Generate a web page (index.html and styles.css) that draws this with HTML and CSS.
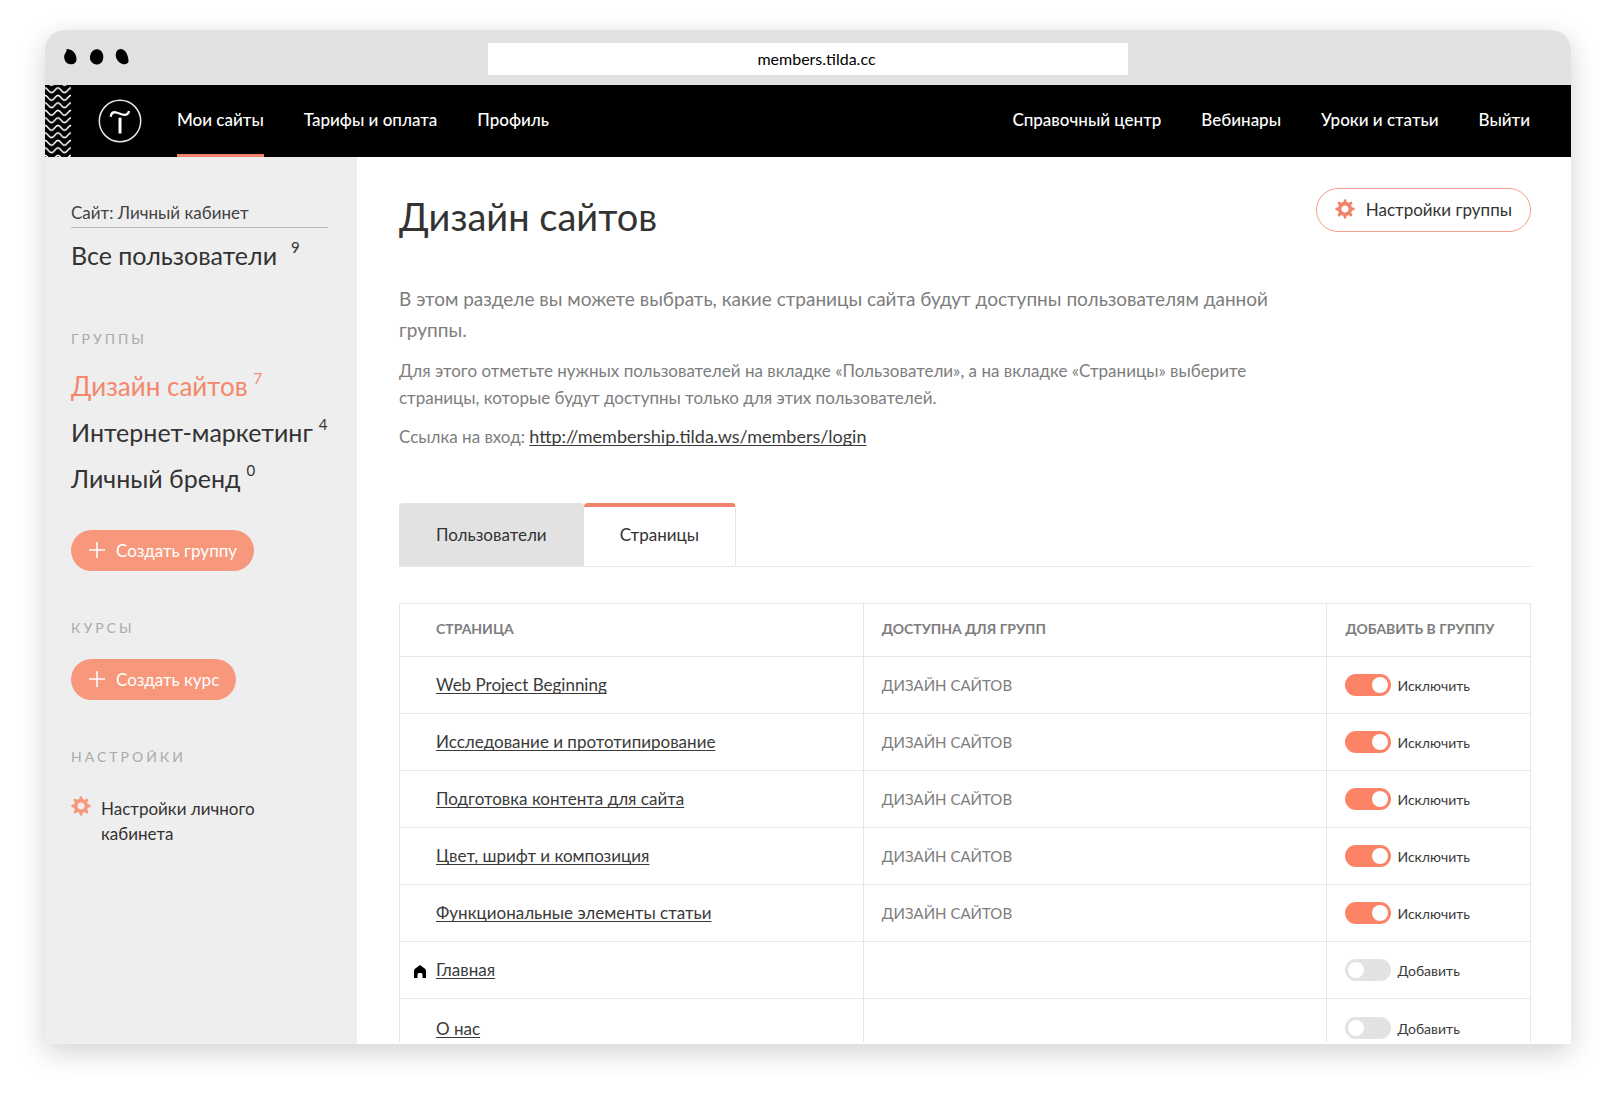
FILE: index.html
```html
<!DOCTYPE html>
<html lang="ru">
<head>
<meta charset="utf-8">
<meta name="viewport" content="width=device-width, initial-scale=1">
<title>Дизайн сайтов — Личный кабинет</title>
<link rel="stylesheet" href="styles.css">
</head>
<body>
<svg class="sprite" aria-hidden="true">
  <symbol id="gear" viewBox="-10 -10 20 20">
    <circle r="5.4" fill="none" stroke="currentColor" stroke-width="3.6"/>
    <path d="M0-6.5V-8.3M0 6.5V8.3M-6.5 0H-8.3M6.5 0H8.3M4.6-4.6 5.9-5.9M-4.6-4.6-5.9-5.9M4.6 4.6 5.9 5.9M-4.6 4.6-5.9 5.9" stroke="currentColor" stroke-width="2.9" stroke-linecap="round"/>
  </symbol>
  <symbol id="plus" viewBox="0 0 16 16">
    <path d="M8 0V16M0 8H16" stroke="currentColor" stroke-width="1.6"/>
  </symbol>
</svg>

<div class="window">
  <div class="chrome">
    <svg class="dots" viewBox="0 0 66 18" aria-hidden="true">
      <path d="M2.500 1C8 1 12.500 5 12.500 11C12.500 15 9.500 16.500 6.500 16.300C2.500 16 0 12.500 .2 8.500C.5 5 3 4.500 2.500 1Z"/>
      <path d="M33 1.200C37 1.500 39.500 5 39.300 9.500C39 14 36 16.600 32.500 16.500C28.500 16 25.700 13 26 9C26.300 5 29 1 33 1.200Z"/>
      <path d="M56.500 1C61 .8 63.800 6 64.500 12C65 15.500 62 16.500 59.500 16.300C55 15.500 51.500 11 51.700 6.500C52 3 53.800 1.200 56.500 1Z"/>
    </svg>
    <input class="address" type="text" value="members.tilda.cc" aria-label="Адрес" readonly>
  </div>

  <header class="topbar">
    <svg class="waves" aria-hidden="true">
      <defs>
        <pattern id="wave" width="13" height="7.5" y="1.6" patternUnits="userSpaceOnUse">
          <path d="M-6.500 6C-3.700 6-2.800 1.300 0 1.300S3.700 6 6.500 6S10.200 1.300 13 1.300S16.700 6 19.500 6" fill="none" stroke="#fff" stroke-width="1.500"/>
        </pattern>
      </defs>
      <rect width="100%" height="100%" fill="url(#wave)"/>
    </svg>
    <a class="logo" href="#" aria-label="Tilda">
      <svg viewBox="-22 -22 44 44" aria-hidden="true">
        <circle r="20.700" fill="none" stroke="#e6e6e6" stroke-width="1.500"/>
        <path d="M-9.300-4.300C-8.800-7.500-7-9-4.500-8.700C-1.500-8.400 1-6.200 4.300-6.200C7-6.200 8.600-7.600 9-10" fill="none" stroke="#fff" stroke-width="2.300"/>
        <path d="M0-3.300V12.500" stroke="#fff" stroke-width="3"/>
      </svg>
    </a>
    <nav class="menu">
      <a class="menu-link is-active" href="#">Мои сайты</a>
      <a class="menu-link" href="#">Тарифы и оплата</a>
      <a class="menu-link" href="#">Профиль</a>
    </nav>
    <nav class="menu menu-right">
      <a class="menu-link" href="#">Справочный центр</a>
      <a class="menu-link" href="#">Вебинары</a>
      <a class="menu-link" href="#">Уроки и статьи</a>
      <a class="menu-link" href="#">Выйти</a>
    </nav>
  </header>

  <div class="layout">
    <aside class="sidebar">
      <a class="site" href="#">Сайт: Личный кабинет</a>
      <a class="group all-users" href="#">Все пользователи <span class="count">9</span></a>

      <h2 class="label">ГРУППЫ</h2>
      <ul class="groups">
        <li><a class="group is-current" href="#">Дизайн сайтов <span class="count">7</span></a></li>
        <li><a class="group" href="#">Интернет-маркетинг <span class="count">4</span></a></li>
        <li><a class="group" href="#">Личный бренд <span class="count">0</span></a></li>
      </ul>
      <button class="create" type="button"><svg class="plus"><use href="#plus"/></svg>Создать группу</button>

      <h2 class="label">КУРСЫ</h2>
      <button class="create" type="button"><svg class="plus"><use href="#plus"/></svg>Создать курс</button>

      <h2 class="label">НАСТРОЙКИ</h2>
      <a class="cabinet" href="#"><svg class="gear"><use href="#gear"/></svg><span>Настройки личного кабинета</span></a>
    </aside>

    <main class="content">
      <div class="heading">
        <h1>Дизайн сайтов</h1>
        <button class="settings" type="button"><svg class="gear"><use href="#gear"/></svg>Настройки группы</button>
      </div>

      <div class="intro">
        <p class="lead">В этом разделе вы можете выбрать, какие страницы сайта будут доступны пользователям данной группы.</p>
        <p>Для этого отметьте нужных пользователей на вкладке «Пользователи», а на вкладке «Страницы» выберите страницы, которые будут доступны только для этих пользователей.</p>
        <p>Ссылка на вход: <a class="link login" href="#">http://membership.tilda.ws/members/login</a></p>
      </div>

      <div class="tabs" role="tablist">
        <button class="tab" type="button" role="tab" aria-selected="false">Пользователи</button>
        <button class="tab is-open" type="button" role="tab" aria-selected="true">Страницы</button>
      </div>

      <table class="pages">
        <thead>
          <tr><th class="page" scope="col">СТРАНИЦА</th><th scope="col">ДОСТУПНА ДЛЯ ГРУПП</th><th class="action" scope="col">ДОБАВИТЬ В ГРУППУ</th></tr>
        </thead>
        <tbody>
          <tr><td class="page"><a class="link" href="#">Web Project Beginning</a></td><td>ДИЗАЙН САЙТОВ</td><td><label class="switch"><input type="checkbox" checked>Исключить</label></td></tr>
          <tr><td class="page"><a class="link" href="#">Исследование и прототипирование</a></td><td>ДИЗАЙН САЙТОВ</td><td><label class="switch"><input type="checkbox" checked>Исключить</label></td></tr>
          <tr><td class="page"><a class="link" href="#">Подготовка контента для сайта</a></td><td>ДИЗАЙН САЙТОВ</td><td><label class="switch"><input type="checkbox" checked>Исключить</label></td></tr>
          <tr><td class="page"><a class="link" href="#">Цвет, шрифт и композиция</a></td><td>ДИЗАЙН САЙТОВ</td><td><label class="switch"><input type="checkbox" checked>Исключить</label></td></tr>
          <tr><td class="page"><a class="link" href="#">Функциональные элементы статьи</a></td><td>ДИЗАЙН САЙТОВ</td><td><label class="switch"><input type="checkbox" checked>Исключить</label></td></tr>
          <tr><td class="page home"><svg class="house" viewBox="0 0 12 13" aria-hidden="true"><path d="M6 0 11 3.800Q12 4.600 12 6V13H8.500V9.500Q8.500 8 7 8H5Q3.500 8 3.500 9.500V13H0V6Q0 4.600 1 3.800Z"/></svg><a class="link" href="#">Главная</a></td><td></td><td><label class="switch"><input type="checkbox">Добавить</label></td></tr>
          <tr><td class="page"><a class="link" href="#">О нас</a></td><td></td><td><label class="switch"><input type="checkbox">Добавить</label></td></tr>
        </tbody>
      </table>
    </main>
  </div>
</div>
</body>
</html>
```
FILE: styles.css
```css
:root {
  --accent: #f0826a;
  --coral: #f7987d;
  --ink: #333;
  --muted: #7d7d7d;
  --line: #e6e6e6;
}

* { box-sizing: border-box; }

body {
  margin: 0;
  padding: 30px 51px 70px 45px;
  background: #fff;
  color: var(--ink);
  font: 17px/25px Lato, "Open Sans", sans-serif;
}

h1, h2, p, ul { margin: 0; padding: 0; font-weight: 400; }
ul { list-style: none; }
a { color: inherit; text-decoration: none; }
button, input { font: inherit; color: inherit; border: 0; margin: 0; }
button { cursor: pointer; }

.sprite { position: absolute; width: 0; height: 0; }

.window {
  border-radius: 20px 20px 0 0;
  background: #fff;
  box-shadow: 0 8px 28px rgba(0, 0, 0, .18);
}

/* Browser bar */
.chrome {
  display: grid;
  grid-template-columns: 1fr 43% 1fr;
  align-items: center;
  height: 55px;
  padding: 2px 19px 0;
  border-radius: 20px 20px 0 0;
  background: #e1e1e1;
}
.dots { width: 66px; height: 18px; margin-bottom: 3px; }
.address {
  width: 100%;
  height: 32px;
  padding: 0 0 0 17px;
  background: #fff;
  color: #000;
  font-size: 16px;
  text-align: center;
}

/* Top navigation */
.topbar {
  display: flex;
  align-items: center;
  height: 72px;
  padding-right: 41px;
  background: #000;
  color: #fff;
}
.waves { width: 26px; height: 72px; }
.logo { margin: 0 35px 0 27px; line-height: 0; }
.logo svg { width: 44px; height: 44px; }
.menu { display: flex; gap: 40px; }
.menu-right { margin-left: auto; }
.menu-link {
  height: 72px;
  padding-top: 3px;
  border-bottom: 3px solid transparent;
  line-height: 64px;
  font-weight: 500;
}
.menu-link.is-active { border-color: var(--accent); }

.layout { display: flex; }

/* Sidebar */
.sidebar {
  flex: 0 0 312px;
  display: flex;
  flex-direction: column;
  align-items: flex-start;
  padding: 43px 29px 40px 26px;
  background: #eee;
}
.site {
  align-self: stretch;
  padding-bottom: 2px;
  border-bottom: 1px solid #bbb;
  color: #444;
}
.group {
  display: flex;
  gap: 6px;
  font-size: 25px;
  line-height: 46px;
  white-space: nowrap;
}
.all-users { gap: 14px; line-height: 54px; }
.count { font-size: 15px; line-height: 30px; }
.all-users .count { line-height: 38px; }
.is-current { color: #f4876c; font-size: 26px; }
.label {
  margin: 44px 0 18px;
  color: #aaa;
  font-size: 14px;
  line-height: 26px;
  letter-spacing: 3px;
}
.all-users + .label { margin-bottom: 11px; }
.create {
  display: flex;
  align-items: center;
  gap: 11px;
  height: 41px;
  padding: 0 17px 1px 18px;
  border-radius: 21px;
  background: var(--coral);
  color: #fff;
}
.groups + .create { margin-top: 29px; }
.plus { width: 16px; height: 16px; }
.gear { flex: none; width: 20px; height: 20px; color: var(--coral); }
.cabinet { display: flex; gap: 10px; max-width: 190px; padding-top: 8px; }

/* Content */
.content { flex: 1; min-width: 0; padding: 31px 40px 2px 42px; }
.heading {
  display: flex;
  justify-content: space-between;
  align-items: flex-start;
}
h1 { font-size: 38px; line-height: 56px; }
.settings {
  display: flex;
  align-items: center;
  gap: 11px;
  height: 44px;
  padding: 0 18px 2px;
  border: 1px solid #f4a08c;
  border-radius: 22px;
  background: none;
}
.settings .gear { color: var(--accent); }
.intro {
  display: grid;
  gap: 12px;
  max-width: 880px;
  margin-top: 39px;
  color: var(--muted);
  line-height: 27px;
}
.lead { font-size: 19px; line-height: 31px; }
.link {
  color: #3a3a3a;
  text-decoration: underline;
  text-decoration-thickness: 1px;
  text-underline-offset: 2px;
  text-decoration-skip-ink: none;
}
.login { font-size: 18px; }

.tabs {
  display: flex;
  margin: 53px 0 36px;
  border-bottom: 1px solid var(--line);
}
.tab {
  height: 63px;
  padding: 0 37px;
  border-radius: 4px 4px 0 0;
  background: #e2e2e2;
}
.tab.is-open {
  padding: 0 36px 4px;
  border-top: 4px solid #f3826a;
  border-right: 1px solid var(--line);
  background: #fff;
}

.pages {
  width: 100%;
  table-layout: fixed;
  border-collapse: collapse;
}
.pages th, .pages td {
  height: 57px;
  padding: 0 18px;
  border: 1px solid var(--line);
  text-align: left;
  white-space: nowrap;
  color: var(--muted);
}
.pages th { width: 41%; height: 53px; padding-bottom: 3px; font-size: 14px; font-weight: 700; }
.pages th.action { width: 18%; }
.pages td { font-size: 15px; }
.pages .page { padding-left: 36px; }
.pages td.page { padding-bottom: 2px; font-size: 17px; }
.pages .home { padding-left: 14px; }
.house { width: 12px; height: 13px; margin-right: 10px; vertical-align: -2px; }
.pages tr:last-child td { height: 43px; padding-top: 16px; padding-bottom: 0; border-bottom: 0; }

.switch {
  display: flex;
  align-items: center;
  gap: 6px;
  color: #3a3a3a;
  font-size: 14px;
}
.switch input {
  appearance: none;
  display: flex;
  align-items: center;
  width: 46px;
  height: 22px;
  padding: 0 3px;
  border-radius: 11px;
  background: #e2e2e2;
}
.switch input::before {
  content: "";
  width: 16px;
  height: 16px;
  border-radius: 50%;
  background: #fff;
}
.switch input:checked { justify-content: flex-end; background: #fd8366; }
```
